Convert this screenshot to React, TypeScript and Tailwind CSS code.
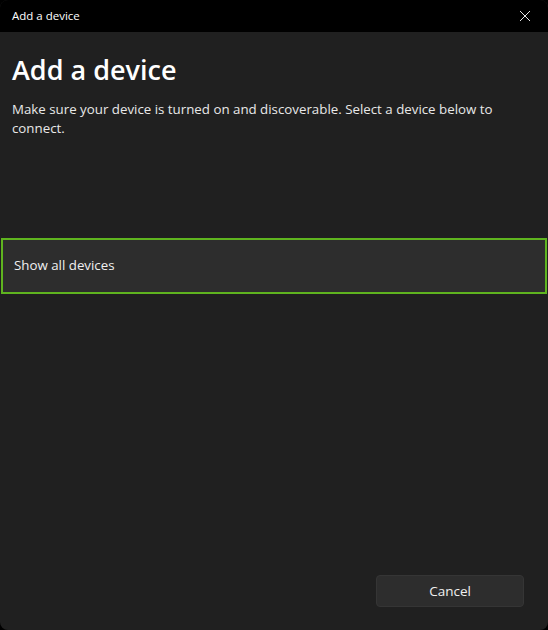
import React from "react";

export default function App() {
  return (
    <div
      className="w-[548px] h-[630px] bg-black overflow-hidden"
      style={{ fontFamily: '"Open Sans", "Noto Sans", sans-serif' }}
    >
      <div className="w-full h-full rounded-t-[8px] rounded-b-[8px] bg-[#202020] flex flex-col overflow-hidden">
        <div className="h-[32px] bg-black flex items-center justify-between pl-[12px] pr-[14px] text-white">
          <span className="text-[11.5px] leading-none">Add a device</span>
          <svg width="12" height="12" viewBox="0 0 12 12" className="mr-[3px]">
            <path d="M1 1 L11 11 M11 1 L1 11" stroke="#e6e6e6" strokeWidth="1" />
          </svg>
        </div>
        <div className="flex-1 flex flex-col">
          <h1 className="text-white text-[27px] font-semibold leading-none px-[12px] mt-[24px]">
            Add a device
          </h1>
          <p className="text-[#e8e8e8] text-[13.3px] leading-[19px] px-[12px] mt-[17px] pr-[40px]">
            Make sure your device is turned on and discoverable. Select a device below to connect.
          </p>
          <div className="mt-[100px] mx-[1px] h-[56px] border-2 border-[#5fb41f] bg-[#2d2d2d] flex items-center px-[11px]">
            <span className="text-[#f0f0f0] text-[13.3px]">Show all devices</span>
          </div>
          <div className="flex-1" />
          <div className="flex justify-end pr-[24px] pb-[23px]">
            <button className="w-[148px] h-[32px] rounded-[4px] bg-[#2d2d2d] border border-[#353535] text-[#f0f0f0] text-[13.5px]">
              Cancel
            </button>
          </div>
        </div>
      </div>
    </div>
  );
}
